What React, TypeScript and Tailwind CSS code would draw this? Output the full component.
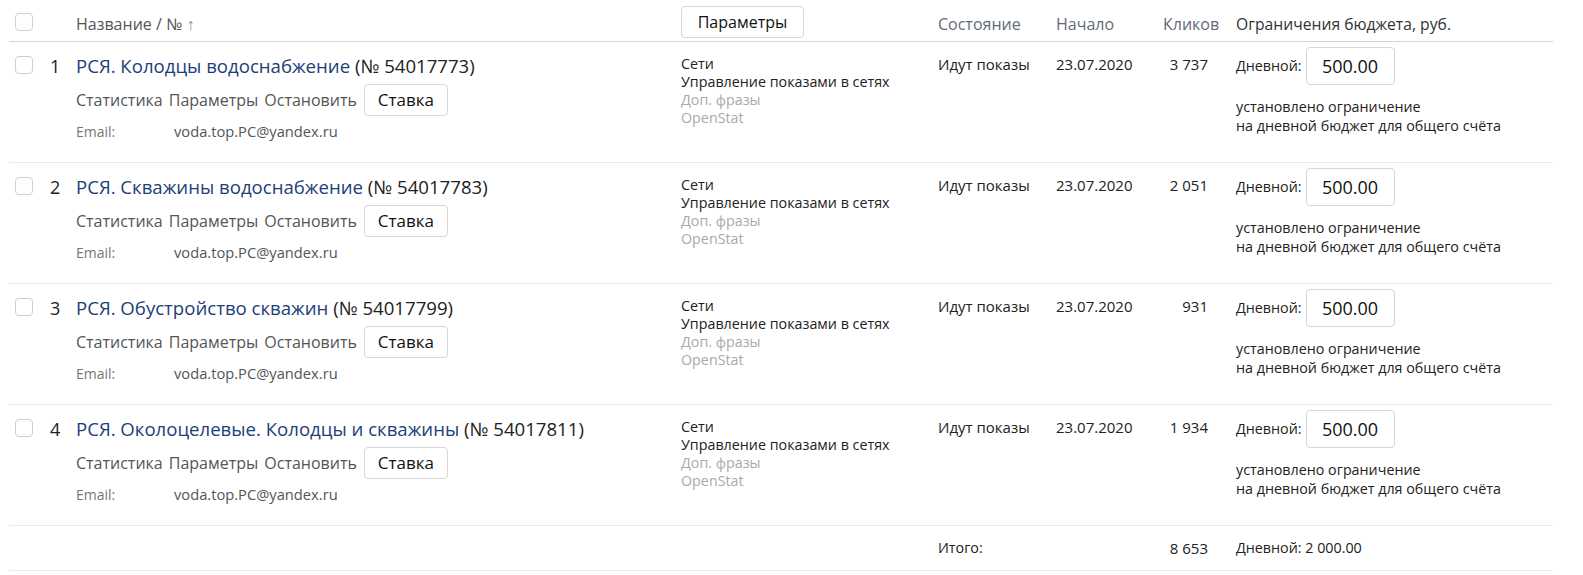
import React from "react";

type Campaign = {
  n: number;
  title: string;
  id: string;
  clicks: string;
};

const campaigns: Campaign[] = [
  { n: 1, title: "РСЯ. Колодцы водоснабжение", id: "54017773", clicks: "3 737" },
  { n: 2, title: "РСЯ. Скважины водоснабжение", id: "54017783", clicks: "2 051" },
  { n: 3, title: "РСЯ. Обустройство скважин", id: "54017799", clicks: "931" },
  { n: 4, title: "РСЯ. Околоцелевые. Колодцы и скважины", id: "54017811", clicks: "1 934" },
];

function Checkbox() {
  return <span className="block w-[18px] h-[18px] rounded-[4px] border border-[#cfcfcf] bg-white" />;
}

function CampaignRow({ c }: { c: Campaign }) {
  return (
    <div className="flex items-start h-[121px] border-b border-[#ececec] pl-[6px]">
      <div className="w-[35px] pt-[14px]">
        <Checkbox />
      </div>
      <div className="w-[26px] pt-[12px] text-[18px] leading-[24px] text-[#222]">{c.n}</div>
      <div className="w-[605px] pt-[12px]">
        <div className="text-[18.6px] leading-[24px] text-[#222]">
          <span className="text-[#1c4078]">{c.title}</span> (№ {c.id})
        </div>
        <div className="flex items-center mt-[6px] text-[16px] text-[#555]">
          <span>Статистика</span>
          <span className="ml-[6px]">Параметры</span>
          <span className="ml-[6px]">Остановить</span>
          <button className="ml-[7px] h-[32px] w-[84px] rounded-[4px] border border-[#d6d6d6] bg-white text-[17px] text-[#111]">
            Ставка
          </button>
        </div>
        <div className="flex items-baseline mt-[5px] leading-[20px]">
          <span className="w-[98px] text-[14px] text-[#777]">Email:</span>
          <span className="text-[14.7px] text-[#555]">voda.top.PC@yandex.ru</span>
        </div>
      </div>
      <div className="w-[257px] pt-[13px] text-[14.3px] leading-[18px]">
        <div className="text-[#222]">Сети</div>
        <div className="text-[#222]">Управление показами в сетях</div>
        <div className="text-[#aaa]">Доп. фразы</div>
        <div className="text-[#aaa]">OpenStat</div>
      </div>
      <div className="w-[118px] pt-[12px] text-[15px] leading-[20px] text-[#222]">Идут показы</div>
      <div className="w-[107px] pt-[12px] text-[15px] leading-[20px] text-[#222]">23.07.2020</div>
      <div className="w-[73px] pt-[12px] pr-[28px] text-right text-[15px] leading-[20px] text-[#222]">{c.clicks}</div>
      <div className="flex-1 pt-[5px]">
        <div className="flex items-center h-[38px]">
          <span className="text-[14.3px] text-[#222]">Дневной:</span>
          <span className="ml-[4px] flex items-center justify-center w-[89px] h-[38px] rounded-[4px] border border-[#d6d6d6] text-[18px] text-[#111]">
            500.00
          </span>
        </div>
        <div className="mt-[12px] text-[14.3px] leading-[19px] text-[#222]">
          <div>установлено ограничение</div>
          <div>на дневной бюджет для общего счёта</div>
        </div>
      </div>
    </div>
  );
}

export default function App() {
  return (
    <div className="bg-white min-h-[575px] pl-[9px]" style={{ fontFamily: "'Open Sans', sans-serif" }}>
      <div className="w-[1544px]">
        <div className="flex items-start h-[42px] border-b border-[#d4d4d4] pl-[6px]">
          <div className="w-[61px] pt-[13px]">
            <Checkbox />
          </div>
          <div className="w-[605px] pt-[13px] text-[16px] leading-[22px] text-[#555]">
            Название / № <span className="text-[#888]">↑</span>
          </div>
          <div className="w-[257px] pt-[6px]">
            <button className="h-[32px] w-[123px] rounded-[4px] border border-[#d6d6d6] bg-white text-[16px] text-[#111]">
              Параметры
            </button>
          </div>
          <div className="w-[118px] pt-[13px] text-[16px] leading-[22px] text-[#5f6b78]">Состояние</div>
          <div className="w-[107px] pt-[13px] text-[16px] leading-[22px] text-[#5f6b78]">Начало</div>
          <div className="w-[73px] pt-[13px] text-[16px] leading-[22px] text-[#5f6b78]">Кликов</div>
          <div className="flex-1 pt-[13px] text-[15.7px] leading-[22px] text-[#333]">Ограничения бюджета, руб.</div>
        </div>
        {campaigns.map((c) => (
          <CampaignRow key={c.n} c={c} />
        ))}
        <div className="flex items-center h-[45px] border-b border-[#ececec] pl-[6px] text-[14.3px] text-[#222]">
          <div className="w-[923px]" />
          <div className="w-[225px]">Итого:</div>
          <div className="w-[73px] pr-[28px] text-right text-[15px]">8 653</div>
          <div className="flex-1">Дневной: 2 000.00</div>
        </div>
      </div>
    </div>
  );
}
